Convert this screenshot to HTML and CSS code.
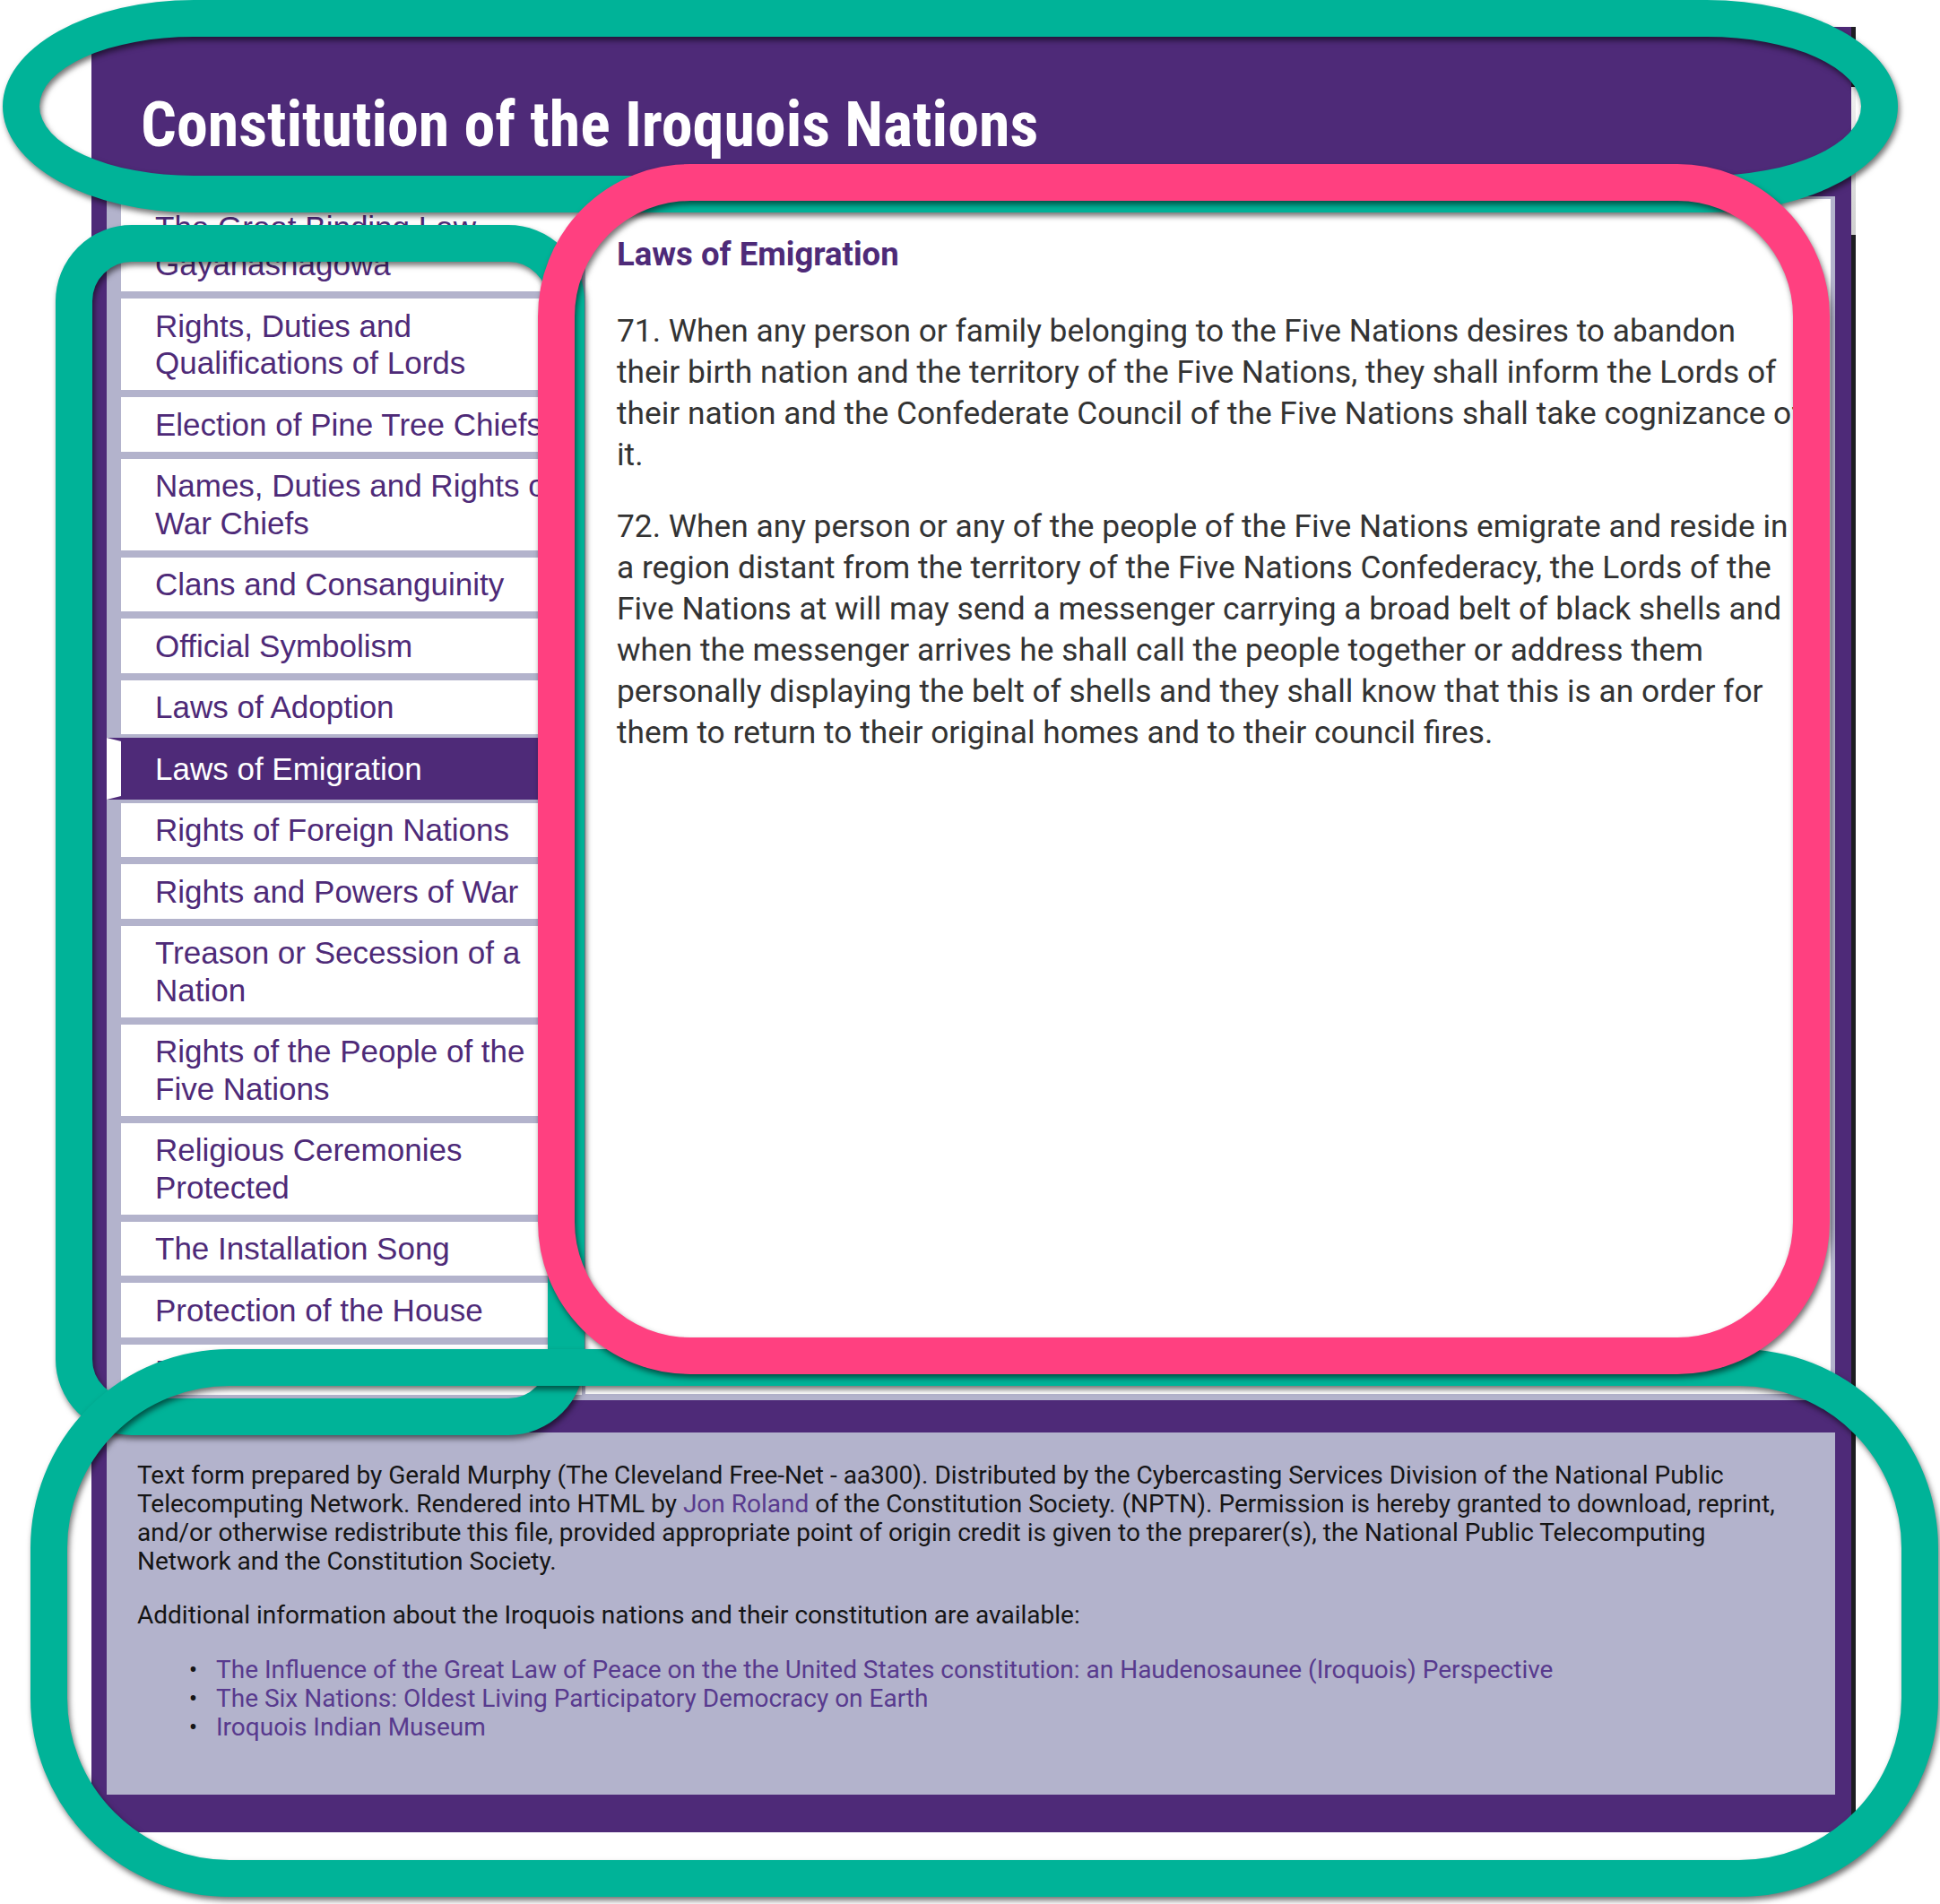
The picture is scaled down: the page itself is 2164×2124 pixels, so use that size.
FILE: index.html
```html
<!DOCTYPE html>
<html lang="en">
<head>
<meta charset="utf-8">
<title>Constitution of the Iroquois Nations</title>
<link rel="stylesheet" href="styles.css">
</head>
<body>
<div class="page">
  <div class="frame">
    <div class="scroll-thumb"></div>
    <header class="masthead">
      <h1 class="title">Constitution of the Iroquois Nations</h1>
    </header>
    <div class="layout">
      <nav class="sidebar">
        <ul class="toc">
          <li class="toc-item">The Great Binding Law Gayanashagowa</li>
          <li class="toc-item">Rights, Duties and Qualifications of Lords</li>
          <li class="toc-item">Election of Pine Tree Chiefs</li>
          <li class="toc-item">Names, Duties and Rights of War Chiefs</li>
          <li class="toc-item">Clans and Consanguinity</li>
          <li class="toc-item">Official Symbolism</li>
          <li class="toc-item">Laws of Adoption</li>
          <li class="toc-item is-active">Laws of Emigration</li>
          <li class="toc-item">Rights of Foreign Nations</li>
          <li class="toc-item">Rights and Powers of War</li>
          <li class="toc-item">Treason or Secession of a Nation</li>
          <li class="toc-item">Rights of the People of the Five Nations</li>
          <li class="toc-item">Religious Ceremonies Protected</li>
          <li class="toc-item">The Installation Song</li>
          <li class="toc-item">Protection of the House</li>
          <li class="toc-item">Funeral Addresses</li>
        </ul>
      </nav>
      <main class="content">
        <h2 class="section-title">Laws of Emigration</h2>
        <p class="article">71. When any person or family belonging to the Five Nations desires to abandon their birth nation and the territory of the Five Nations, they shall inform the Lords of their nation and the Confederate Council of the Five Nations shall take cognizance of it.</p>
        <p class="article">72. When any person or any of the people of the Five Nations emigrate and reside in a region distant from the territory of the Five Nations Confederacy, the Lords of the Five Nations at will may send a messenger carrying a broad belt of black shells and when the messenger arrives he shall call the people together or address them personally displaying the belt of shells and they shall know that this is an order for them to return to their original homes and to their council fires.</p>
      </main>
    </div>
    <footer class="credits">
      <p class="credits-text">Text form prepared by Gerald Murphy (The Cleveland Free-Net - aa300). Distributed by the Cybercasting Services Division of the National Public Telecomputing Network. Rendered into HTML by <a class="link" href="#">Jon Roland</a> of the Constitution Society. (NPTN). Permission is hereby granted to download, reprint, and/or otherwise redistribute this file, provided appropriate point of origin credit is given to the preparer(s), the National Public Telecomputing Network and the Constitution Society.</p>
      <p class="credits-text credits-lead">Additional information about the Iroquois nations and their constitution are available:</p>
      <ul class="resources">
        <li class="resource"><a class="link" href="#">The Influence of the Great Law of Peace on the the United States constitution: an Haudenosaunee (Iroquois) Perspective</a></li>
        <li class="resource"><a class="link" href="#">The Six Nations: Oldest Living Participatory Democracy on Earth</a></li>
        <li class="resource"><a class="link" href="#">Iroquois Indian Museum</a></li>
      </ul>
    </footer>
  </div>

  <div class="mark mark-header"></div>
  <div class="mark mark-sidebar"></div>
  <div class="mark mark-footer"></div>
  <div class="mark mark-main"></div>
</div>
</body>
</html>
```

FILE: styles.css
```css
html, body {
  margin: 0;
  padding: 0;
  background: #ffffff;
}

.page {
  position: relative;
  width: 2164px;
  height: 2124px;
  overflow: hidden;
  background: #ffffff;
}

/* ---------- page frame ---------- */
.frame {
  position: relative;
  box-sizing: border-box;
  width: 1968px;
  margin: 30px 0 0 102px;
  padding: 0 18px 42px 17px;
  background: #4e2a78;
  border-right: 5px solid #1d1d22;
}

.scroll-thumb {
  position: absolute;
  right: -5px;
  top: 67px;
  width: 5px;
  height: 165px;
  background: linear-gradient(#f0f0f0, #cfcfcf);
}

.masthead {
  box-sizing: border-box;
  height: 189px;
  padding: 74px 0 0 38px;
}

.title {
  margin: 0;
  font-family: "Roboto Condensed", "Roboto", "Liberation Sans", sans-serif;
  font-stretch: condensed;
  font-weight: 700;
  font-size: 70px;
  line-height: 70px;
  color: #ffffff;
  white-space: nowrap;
}

/* ---------- two-column body ---------- */
.layout {
  display: flex;
  height: 1343px;
  background: #b3b3cc;
}

.sidebar {
  flex: 0 0 530px;
  height: 1337px;
  overflow: hidden;
}

.toc {
  list-style: none;
  margin: 0;
  padding: 0;
}

.toc-item {
  background: #ffffff;
  border-left: 16px solid #b3b3cc;
  border-top: 4px solid #b3b3cc;
  border-bottom: 4px solid #b3b3cc;
  padding: 9.5px 10px 9.5px 38px;
  font-family: "Liberation Sans", Arial, sans-serif;
  font-size: 35px;
  line-height: 41.5px;
  color: #4e2a78;
}

.toc-item.is-active {
  background: #4e2a78;
  color: #ffffff;
  border-color: #4e2a78;
  border-left-color: #ffffff;
}

.content {
  flex: 1 1 auto;
  margin: 3px 5px 7px 4px;
  padding: 42px 29px 0 35px;
  background: #ffffff;
}

.section-title {
  margin: 0 0 42px;
  font-family: "Roboto", "Liberation Sans", sans-serif;
  font-weight: 700;
  font-size: 36.5px;
  line-height: 40px;
  color: #4e2a78;
}

.article {
  margin: 0 0 34px;
  font-family: "Roboto", "Liberation Sans", sans-serif;
  font-size: 35.3px;
  line-height: 46px;
  color: #333333;
}

/* ---------- footer ---------- */
.credits {
  box-sizing: border-box;
  height: 404px;
  margin-top: 36px;
  padding: 32px 45px 0 34px;
  background: #b3b3cc;
  font-family: "Roboto", "Liberation Sans", sans-serif;
  font-size: 28px;
  line-height: 32px;
  color: #151515;
}

.credits-text {
  margin: 0 0 28px;
}

.credits-lead {
  margin-bottom: 29px;
}

.resources {
  margin: 0;
  padding-left: 88px;
}

.resource::marker {
  content: "\2022\00a0\00a0\00a0";
  color: #151515;
}

.link {
  color: #583a8e;
  text-decoration: none;
}

/* ---------- annotation outlines ---------- */
.mark {
  position: absolute;
  box-sizing: border-box;
  border: 41px solid #00b398;
  filter: drop-shadow(2px 4px 3px rgba(0, 0, 0, 0.55));
  pointer-events: none;
}

.mark-header {
  left: 3px;
  top: 0;
  width: 2114px;
  height: 237px;
  border-radius: 214px / 119px;
}

.mark-sidebar {
  left: 62px;
  top: 251px;
  width: 590px;
  height: 1350px;
  border-radius: 85px;
}

.mark-footer {
  left: 34px;
  top: 1505px;
  width: 2128px;
  height: 611px;
  border-radius: 222px;
}

.mark-main {
  left: 600px;
  top: 183px;
  width: 1441px;
  height: 1350px;
  border-color: #ff4080;
  border-radius: 170px;
}
```
